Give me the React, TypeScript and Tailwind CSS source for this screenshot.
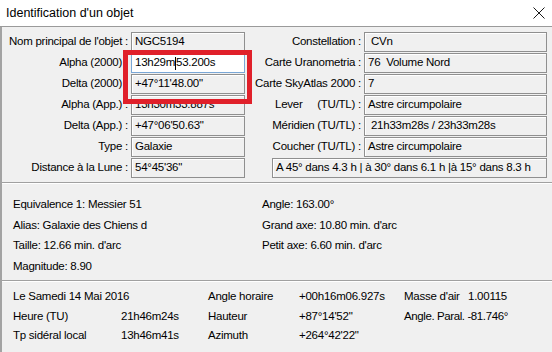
import React from "react";

const font = { fontFamily: '"Liberation Sans", Arial, sans-serif' };

type Row = { label: string; value: string; focused?: boolean };

const leftRows: Row[] = [
  { label: "Nom principal de l'objet :", value: "NGC5194" },
  { label: "Alpha (2000) :", value: "13h29m53.200s", focused: true },
  { label: "Delta (2000) :", value: "+47°11'48.00\"" },
  { label: "Alpha (App.) :", value: "13h30m33.887s" },
  { label: "Delta (App.) :", value: "+47°06'50.63\"" },
  { label: "Type :", value: "Galaxie" },
  { label: "Distance à la Lune :", value: "54°45'36\"" },
];

const rightRows: Row[] = [
  { label: "Constellation :", value: " CVn" },
  { label: "Carte Uranometria :", value: "76  Volume Nord" },
  { label: "Carte SkyAtlas 2000 :", value: "7" },
  { label: "Lever     (TU/TL) :", value: "Astre circumpolaire" },
  { label: "Méridien (TU/TL) :", value: " 21h33m28s / 23h33m28s" },
  { label: "Coucher (TU/TL) :", value: "Astre circumpolaire" },
];

function Field({ value, focused }: { value: string; focused?: boolean }) {
  return (
    <div
      className={`h-[20px] border pl-[3px] flex items-center whitespace-pre overflow-hidden ${
        focused
          ? "bg-white border-[#7aa7d6]"
          : "bg-[#f0f0f0] border-[#8f8f8f] shadow-[inset_1px_1px_0_#ffffff]"
      }`}
    >
      {focused ? (
        <>
          13h29m
          <span className="w-px h-[13px] bg-black" />
          53.200s
        </>
      ) : (
        value
      )}
    </div>
  );
}

function Separator() {
  return <div className="h-[2px] border-t border-[#a0a0a0] bg-white" />;
}

export default function App() {
  return (
    <div
      className="w-[552px] h-[352px] bg-[#f0f0f0] text-black text-[11.5px] tracking-[-0.25px] overflow-hidden"
      style={font}
    >
      {/* Title bar */}
      <div className="h-[27px] bg-white border-b border-[#9a9a9a] flex items-center justify-between pl-[6px] pr-[6px]">
        <span className="text-[12.5px] tracking-normal">Identification d'un objet</span>
        <svg width="12" height="12" viewBox="0 0 12 12" className="mr-[1px]">
          <path d="M0.5 0.5 L11.5 11.5 M11.5 0.5 L0.5 11.5" stroke="#1a1a1a" strokeWidth="1" />
        </svg>
      </div>

      <div className="border-l-[2px] border-[#a3a3a3] h-[325px]">
        {/* Top fields */}
        <div className="relative grid grid-cols-[126px_114px_113px_183px] content-start gap-x-[3px] gap-y-px pt-[5px] pb-[4px]">
          {leftRows.map((r, i) => (
            <React.Fragment key={r.label}>
              <div className="h-[20px] flex items-center justify-end whitespace-pre">{r.label}</div>
              <Field value={r.value} focused={r.focused} />
              {i < 6 ? (
                <>
                  <div className="h-[20px] flex items-center justify-end whitespace-pre">
                    {rightRows[i].label}
                  </div>
                  <Field value={rightRows[i].value} />
                </>
              ) : (
                <div className="col-span-2 ml-[24px] h-[20px] border border-[#8f8f8f] bg-[#f0f0f0] shadow-[inset_1px_1px_0_#ffffff] pl-[3px] flex items-center whitespace-pre">
                  A 45° dans 4.3 h | à 30° dans 6.1 h |à 15° dans 8.3 h
                </div>
              )}
            </React.Fragment>
          ))}
          {/* red highlight */}
          <div className="absolute left-[121px] top-[23px] w-[129px] h-[54px] border-[5px] border-[#e0202a]" />
        </div>

        <Separator />

        {/* Object info */}
        <div className="grid grid-cols-[249px_1fr] pl-[11px] pt-[10px] h-[96px] leading-[20.5px]">
          <div>
            <div>Equivalence 1: Messier 51</div>
            <div>Alias: Galaxie des Chiens d</div>
            <div>Taille: 12.66 min. d'arc</div>
            <div>Magnitude: 8.90</div>
          </div>
          <div>
            <div>Angle: 163.00°</div>
            <div>Grand axe: 10.80 min. d'arc</div>
            <div>Petit axe: 6.60 min. d'arc</div>
          </div>
        </div>

        <Separator />

        {/* Ephemeris */}
        <div className="grid grid-cols-[108px_87px_91px_105px_57px_1fr] pl-[11px] pt-[5px] leading-[19.5px] whitespace-nowrap">
          <div className="col-span-2">Le Samedi 14 Mai 2016</div>
          <div>Angle horaire</div>
          <div>+00h16m06.927s</div>
          <div>Masse d'air</div>
          <div className="pl-[7px]">1.00115</div>

          <div>Heure (TU)</div>
          <div>21h46m24s</div>
          <div>Hauteur</div>
          <div>+87°14'52"</div>
          <div className="col-span-2 tracking-[-0.4px]">Angle. Paral. -81.746°</div>

          <div>Tp sidéral local</div>
          <div>13h46m41s</div>
          <div>Azimuth</div>
          <div>+264°42'22"</div>
          <div className="col-span-2" />
        </div>
      </div>
    </div>
  );
}
